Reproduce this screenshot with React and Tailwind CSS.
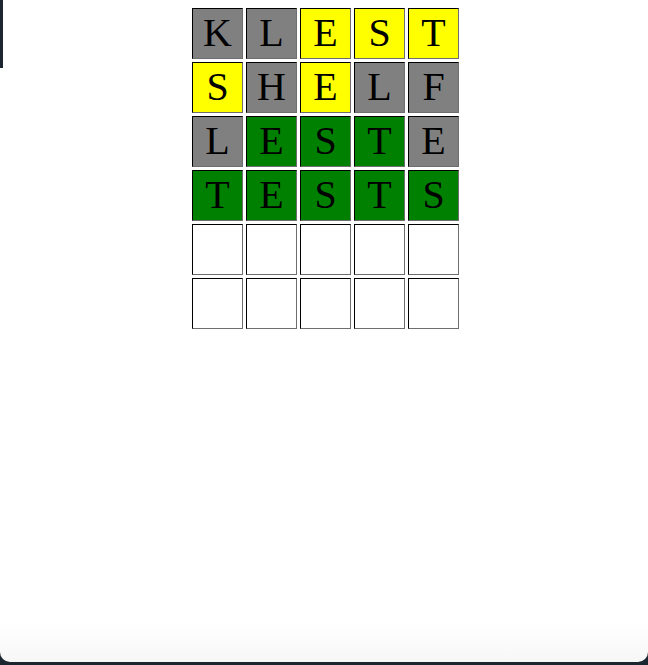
import React from 'react';

const ROWS = [
  [['K', 'gray'], ['L', 'gray'], ['E', 'yellow'], ['S', 'yellow'], ['T', 'yellow']],
  [['S', 'yellow'], ['H', 'gray'], ['E', 'yellow'], ['L', 'gray'], ['F', 'gray']],
  [['L', 'gray'], ['E', 'green'], ['S', 'green'], ['T', 'green'], ['E', 'gray']],
  [['T', 'green'], ['E', 'green'], ['S', 'green'], ['T', 'green'], ['S', 'green']],
  [['', 'empty'], ['', 'empty'], ['', 'empty'], ['', 'empty'], ['', 'empty']],
  [['', 'empty'], ['', 'empty'], ['', 'empty'], ['', 'empty'], ['', 'empty']],
];

const TILE_BG = {
  gray: 'bg-[#808080]',
  yellow: 'bg-[#ffff00]',
  green: 'bg-[#008000]',
  empty: 'bg-white',
};

const Tile = ({ letter, state }) => (
  <div
    className={`w-[51px] h-[51px] flex items-center justify-center border border-t-black border-l-black border-r-[#6e6e6e] border-b-[#6e6e6e] text-[40px] leading-none text-black ${TILE_BG[state]}`}
    style={{ fontFamily: '"Liberation Serif", "Times New Roman", serif' }}
  >
    <span className="-mt-[2px]">{letter}</span>
  </div>
);

export default function App() {
  return (
    <div className="relative w-[648px] h-[665px] bg-[#1c2630] overflow-hidden">
      <div className="h-[662px] bg-gradient-to-b from-white from-[94%] to-[#f7f7f7] rounded-b-[10px] pt-[8px] pl-[3px] flex justify-center">
        <div className="flex flex-col gap-[3px]">
          {ROWS.map((row, r) => (
            <div key={r} className="flex gap-[3px]">
              {row.map(([letter, state], c) => (
                <Tile key={c} letter={letter} state={state} />
              ))}
            </div>
          ))}
        </div>
      </div>
      <div className="absolute left-0 top-0 w-[3px] h-[68px] bg-[#1c2630]" />
    </div>
  );
}
